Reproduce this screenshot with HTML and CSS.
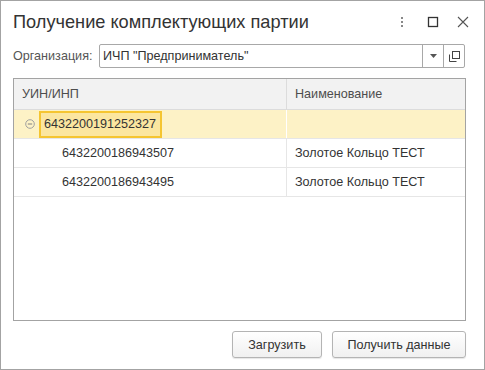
FILE: index.html
```html
<!DOCTYPE html>
<html lang="ru">
<head>
    <meta charset="UTF-8">
    <title>Получение комплектующих партии</title>
    <link rel="stylesheet" href="styles.css">
</head>
<body>
    <div class="window">
        <div class="title-bar">
            <h1>Получение комплектующих партии</h1>
            <div class="title-tools">
                <svg class="tool tool-more" width="10" height="12" viewBox="0 0 10 12">
                    <rect x="4" y="1" width="2" height="2" fill="#888"/>
                    <rect x="4" y="5" width="2" height="2" fill="#888"/>
                    <rect x="4" y="9" width="2" height="2" fill="#888"/>
                </svg>
                <svg class="tool tool-max" width="12" height="12" viewBox="0 0 12 12">
                    <rect x="1.5" y="1.5" width="9" height="9" fill="none" stroke="#333" stroke-width="1.3"/>
                </svg>
                <svg class="tool tool-close" width="12" height="12" viewBox="0 0 12 12">
                    <path d="M1 1 L11 11 M11 1 L1 11" stroke="#555" stroke-width="1.1"/>
                </svg>
            </div>
        </div>

        <div class="org-row">
            <label for="org">Организация:</label>
            <div class="field" id="org">
                <span class="field-text">ИЧП "Предприниматель"</span>
                <span class="field-btn">
                    <svg width="7" height="4" viewBox="0 0 7 4"><path d="M0 0 H7 L3.5 4 Z" fill="#555"/></svg>
                </span>
                <span class="field-btn">
                    <svg width="11" height="11" viewBox="0 0 11 11">
                        <rect x="3.5" y="0.5" width="7" height="7" fill="none" stroke="#444"/>
                        <path d="M0.5 3.5 V10.5 H7.5" fill="none" stroke="#444"/>
                    </svg>
                </span>
            </div>
        </div>

        <div class="grid">
            <div class="grid-row head">
                <div class="cell">УИН/ИНП</div>
                <div class="cell">Наименование</div>
            </div>
            <div class="grid-row current">
                <div class="cell">
                    <svg class="collapse" width="10" height="10" viewBox="0 0 10 10">
                        <circle cx="5" cy="5" r="4.3" fill="none" stroke="#a0a0a0"/>
                        <path d="M2.8 5 H7.2" stroke="#808080"/>
                    </svg>
                    <span class="selected">6432200191252327</span>
                </div>
                <div class="cell"></div>
            </div>
            <div class="grid-row">
                <div class="cell child">6432200186943507</div>
                <div class="cell">Золотое Кольцо ТЕСТ</div>
            </div>
            <div class="grid-row">
                <div class="cell child">6432200186943495</div>
                <div class="cell">Золотое Кольцо ТЕСТ</div>
            </div>
        </div>

        <div class="actions">
            <button class="btn btn-load">Загрузить</button>
            <button class="btn btn-get">Получить данные</button>
        </div>
    </div>
</body>
</html>
```

FILE: styles.css
```css
body {
    margin: 0;
    font-family: Arial, "Liberation Sans", sans-serif;
    background-color: #fff;
}
.window {
    width: 453px;
    height: 368px;
    padding: 0 18px 0 12px;
    border: 1px solid #a3a3a3;
    display: flex;
    flex-direction: column;
    background-color: #fff;
}
.title-bar {
    height: 42px;
    display: flex;
    align-items: center;
    justify-content: space-between;
}
.title-bar h1 {
    margin: 0;
    font-size: 18.2px;
    font-weight: normal;
    color: #333;
}
.title-tools {
    display: flex;
    align-items: center;
    margin-right: -3px;
}
.tool-max {
    margin-left: 20px;
}
.tool-close {
    margin-left: 18px;
}
.org-row {
    display: flex;
    align-items: center;
    margin-top: 1px;
}
.org-row label {
    width: 86px;
    font-size: 12.6px;
    color: #555;
}
.field {
    flex: 1;
    height: 22px;
    margin-right: 1px;
    display: flex;
    border: 1px solid #a8a8a8;
    border-radius: 2px;
}
.field-text {
    flex: 1;
    padding-left: 3px;
    line-height: 22px;
    font-size: 12.6px;
    color: #333;
}
.field-btn {
    width: 20px;
    display: flex;
    align-items: center;
    justify-content: center;
    border-left: 1px solid #a8a8a8;
}
.grid {
    flex: 1;
    margin-top: 10px;
    border: 1px solid #a3a3a3;
}
.grid-row {
    display: grid;
    grid-template-columns: 273px 1fr;
    height: 28px;
    border-bottom: 1px solid #e6e6e6;
    font-size: 12.6px;
    color: #333;
}
.grid-row .cell {
    display: flex;
    align-items: center;
    padding-left: 8px;
    border-right: 1px solid #e6e6e6;
}
.grid-row .cell:last-child {
    border-right: none;
}
.grid-row.head {
    height: 30px;
    background-color: #f2f2f2;
    color: #4d4d4d;
    border-bottom-color: #dcdcdc;
}
.grid-row.head .cell {
    border-right-color: #dcdcdc;
}
.grid-row.current {
    background-color: #fdf2c6;
}
.grid-row.current .cell {
    border-right-color: #fff;
}
.grid-row.current .cell:first-child {
    padding-left: 11px;
}
.collapse {
    margin-right: 4px;
}
.selected {
    display: flex;
    align-items: center;
    height: 23px;
    padding: 0 4px 0 3px;
    border: 2px solid #f5c531;
    background-color: #fbe6a0;
}
.cell.child {
    padding-left: 48px;
}
.actions {
    display: flex;
    justify-content: flex-end;
    gap: 10px;
    margin: 10px 0 11px;
}
.btn {
    height: 27px;
    padding: 0 12px;
    font-family: Arial, "Liberation Sans", sans-serif;
    font-size: 12.6px;
    color: #333;
    border: 1px solid #b4b4b4;
    border-radius: 3px;
    background: linear-gradient(#fff, #f0f0f0);
    box-shadow: 0 1px 1px rgba(0, 0, 0, 0.1);
    cursor: pointer;
}
.btn-load {
    width: 90px;
}
.btn-get {
    width: 134px;
}
```
